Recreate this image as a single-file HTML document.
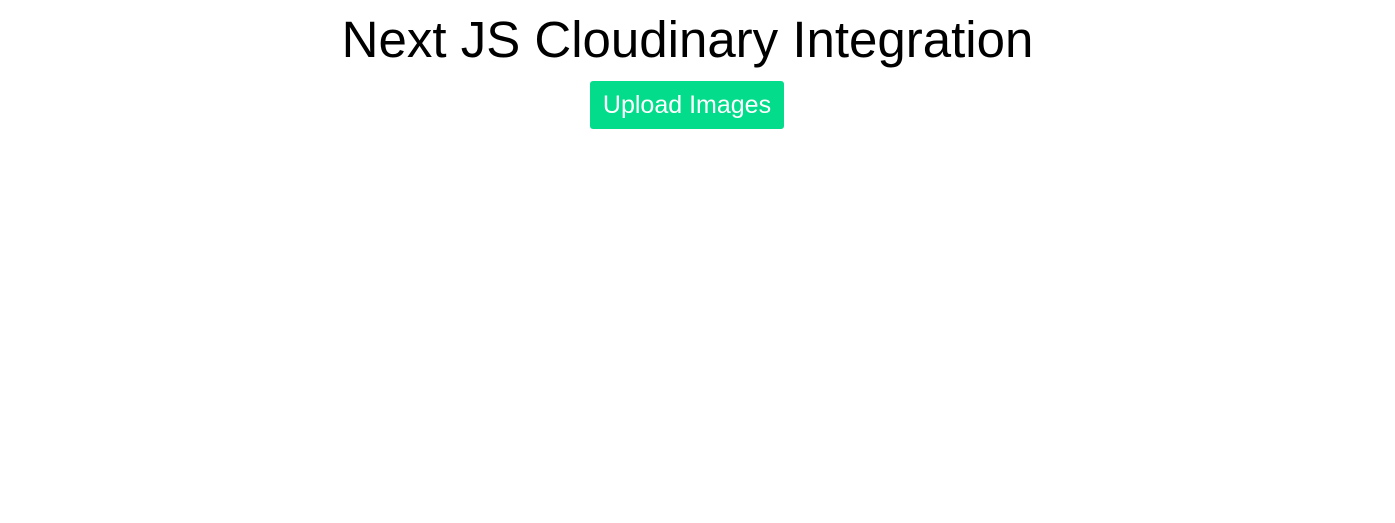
<!DOCTYPE html>
<html><head><meta charset="utf-8"><style>
html,body{margin:0;padding:0;background:#fff;width:1395px;height:523px;overflow:hidden}
body{font-family:"Liberation Sans",sans-serif;text-align:center}
h1{font-weight:400;font-size:51px;margin:0;position:absolute;left:0;right:20px;top:10px;line-height:60px;color:#000}
.btn{position:absolute;left:590px;top:81px;width:194px;height:48px;background:#03dc8a;color:#fff;border-radius:3px;font-size:25px;line-height:48px;text-align:center}
</style></head><body>
<h1>Next JS Cloudinary Integration</h1>
<div class="btn">Upload Images</div>
</body></html>
